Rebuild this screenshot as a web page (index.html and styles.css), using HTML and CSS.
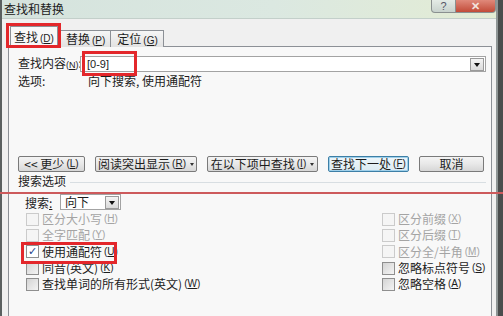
FILE: index.html
```html
<!DOCTYPE html>
<html lang="zh-CN">
<head>
    <meta charset="UTF-8">
    <meta name="viewport" content="width=device-width, initial-scale=1.0">
    <title>查找和替换</title>
    <link rel="stylesheet" href="styles.css">
</head>
<body>
    <div class="window">
        <div class="titlebar">
            <span class="title">查找和替换</span>
            <div class="caption-btns">
                <span class="cap-help">?</span>
                <span class="cap-close">✕</span>
            </div>
        </div>

        <div class="dialog">
            <div class="tabs">
                <span class="tab current">查找<span class="key">(<u>D</u>)</span></span>
                <span class="tab">替换<span class="key">(<u>P</u>)</span></span>
                <span class="tab">定位<span class="key">(<u>G</u>)</span></span>
            </div>

            <div class="panel">
                <div class="find-row">
                    <span class="find-label">查找内容<span class="key">(<u>N</u>)</span>:</span>
                    <div class="combo find-combo">
                        <span class="value marked">[0-9]</span>
                        <span class="drop"></span>
                    </div>
                </div>
                <div class="opts-row">
                    <span class="opts-label">选项:</span>
                    <span>向下搜索, 使用通配符</span>
                </div>

                <div class="btn-row">
                    <span class="btn b-less">&lt;&lt; 更少<span class="key">(<u>L</u>)</span></span>
                    <span class="btn b-read">阅读突出显示<span class="key">(<u>R</u>)</span><i class="arrow"></i></span>
                    <span class="btn b-in">在以下项中查找<span class="key">(<u>I</u>)</span><i class="arrow"></i></span>
                    <span class="btn b-next focus">查找下一处<span class="key">(<u>F</u>)</span></span>
                    <span class="btn b-cancel">取消</span>
                </div>

                <div class="section-title">搜索选项</div>

                <div class="search-row">
                    <span class="search-label">搜索<u>:</u></span>
                    <div class="combo dir-combo">
                        <span class="value">向下</span>
                        <span class="drop"></span>
                    </div>
                </div>

                <div class="checks">
                    <div class="chk off"><span class="box"></span>区分大小写<span class="key">(<u>H</u>)</span></div>
                    <div class="chk off"><span class="box"></span>区分前缀<span class="key">(<u>X</u>)</span></div>
                    <div class="chk off"><span class="box"></span>全字匹配<span class="key">(<u>Y</u>)</span></div>
                    <div class="chk off"><span class="box"></span>区分后缀<span class="key">(<u>T</u>)</span></div>
                    <div class="chk marked-row"><span class="box checked">✓</span>使用通配符<span class="key">(<u>U</u>)</span></div>
                    <div class="chk off"><span class="box"></span>区分全/半角<span class="key">(<u>M</u>)</span></div>
                    <div class="chk"><span class="box"></span>同音(英文)<span class="key">(<u>K</u>)</span></div>
                    <div class="chk"><span class="box"></span>忽略标点符号<span class="key">(<u>S</u>)</span></div>
                    <div class="chk"><span class="box"></span>查找单词的所有形式(英文)<span class="key">(<u>W</u>)</span></div>
                    <div class="chk"><span class="box"></span>忽略空格<span class="key">(<u>A</u>)</span></div>
                </div>
            </div>
        </div>
    </div>

    <div class="red-line"></div>
</body>
</html>
```

FILE: styles.css
```css
body {
    margin: 0;
    height: 316px;
    overflow: hidden;
    position: relative;
    background: #4a4d4d;
    font-family: "Noto Sans CJK SC", "Liberation Sans", sans-serif;
    font-size: 12px;
    color: #1c1c1c;
    white-space: nowrap;
}
.window {
    width: 494px;
    height: 316px;
    border-left: 2px solid #5b6060;
    border-right: 2px solid #8e9595;
    background: #f0f0f0;
    display: flex;
    flex-direction: column;
}
.titlebar {
    height: 18px;
    display: flex;
    align-items: flex-start;
    background: linear-gradient(90deg, #d5e3dd, #dbe8e1 55%, #e3ecd4);
    border-bottom: 1px solid #c3cfca;
}
.title {
    padding: 2px 0 0 2px;
    line-height: 14px;
    color: #202020;
}
.caption-btns {
    margin-left: auto;
    display: flex;
}
.cap-help, .cap-close {
    height: 12px;
    line-height: 12px;
    text-align: center;
    font-family: "Liberation Sans", sans-serif;
    font-size: 11px;
    border: 1px solid #8a9090;
    border-top: none;
}
.cap-help {
    width: 23px;
    background: linear-gradient(#e4ebe6, #c8d2cd);
    color: #556;
    border-radius: 0 0 0 4px;
}
.cap-close {
    width: 39px;
    background: linear-gradient(#e0897a, #c24b38);
    color: #f3e2dc;
    font-weight: bold;
    border-left: none;
    border-radius: 0 0 4px 0;
}

.dialog {
    flex: 1;
    display: flex;
    flex-direction: column;
}
.tabs {
    height: 21px;
    padding: 7px 0 0 8px;
    display: flex;
    align-items: flex-end;
    margin-bottom: -1px;
    position: relative;
    z-index: 1;
}
.tab {
    height: 16px;
    line-height: 16px;
    padding: 0 5px 0 6px;
    border: 1px solid #8c9096;
    border-bottom: none;
    background: linear-gradient(#f6f6f6, #e2e2e2);
    margin-left: -1px;
}
.tab.current {
    height: 20px;
    line-height: 20px;
    padding: 0 3px;
    background: #f8f8f8;
    margin-left: 0;
    margin-right: 2px;
    position: relative;
}
.tab.current::after {
    content: "";
    position: absolute;
    left: -5px;
    right: -4px;
    top: -4px;
    bottom: -1px;
    border: 3px solid #e3272b;
}
.key {
    font-size: 10px;
    font-family: "Liberation Sans", sans-serif;
    padding-left: 2px;
}

.panel {
    flex: 1;
    margin: 0 4px 0 6px;
    padding: 8px 5px 0 9px;
    border: 1px solid #8c9096;
    border-bottom: none;
    background: #f8f8f8;
}
.find-row, .search-row {
    display: flex;
    align-items: center;
}
.find-label {
    width: 62px;
    flex-shrink: 0;
    line-height: 16px;
}
.find-label .key {
    font-size: 9px;
    padding-left: 0;
}
.combo {
    height: 14px;
    border: 1px solid #a3a3a3;
    background: #fff;
    display: flex;
    align-items: center;
    padding-left: 4px;
}
.find-combo {
    flex: 1;
    padding-left: 6px;
}
.value {
    line-height: 14px;
    font-size: 11px;
}
.value.marked {
    font-family: "Liberation Sans", sans-serif;
    position: relative;
}
.value.marked::after {
    content: "";
    position: absolute;
    left: -5px;
    right: -28px;
    top: -6px;
    bottom: -5px;
    border: 3px solid #e3272b;
}
.drop {
    margin-left: auto;
    width: 12px;
    height: 11px;
    margin-right: 1px;
    border: 1px solid #9a9a9a;
    background: linear-gradient(#f4f4f4, #dadada);
    position: relative;
}
.drop::after {
    content: "";
    position: absolute;
    left: 3px;
    top: 4px;
    border: 3px solid transparent;
    border-top: 4px solid #111;
    border-bottom: none;
}
.opts-row {
    margin-top: 2px;
    line-height: 12px;
    display: flex;
}
.opts-label {
    width: 70px;
}

.btn-row {
    margin-top: 69px;
    display: flex;
    gap: 10px;
}
.btn {
    height: 14px;
    line-height: 14px;
    border: 1px solid #7a7a7a;
    border-radius: 2px;
    background: linear-gradient(#f4f4f4, #e8e8e8 50%, #d6d6d6);
    display: flex;
    justify-content: center;
    align-items: center;
}
.btn.focus {
    border-color: #3d7fa6;
    background: linear-gradient(#eef6fa, #dcebf2);
    box-shadow: inset 0 0 0 1px #9fd0ea;
}
.b-less { width: 65px; }
.b-read { width: 100px; }
.b-in { width: 109px; }
.b-next { width: 79px; }
.b-cancel { width: 63px; }
.arrow {
    margin-left: 4px;
    border: 2.5px solid transparent;
    border-top: 3px solid #333;
    border-bottom: none;
}

.section-title {
    margin-top: 3px;
    line-height: 12px;
    display: flex;
    align-items: center;
}
.section-title::after {
    content: "";
    flex: 1;
    margin: 2px 0 0 4px;
    border-top: 1px solid #d8dee2;
}

.search-row {
    margin-top: 7px;
    padding-left: 7px;
}
.search-label {
    width: 35px;
    line-height: 15px;
}
.dir-combo {
    width: 55px;
}
.dir-combo .value {
    font-size: 12px;
}

.checks {
    padding-left: 8px;
    display: grid;
    grid-template-columns: 356px 1fr;
    grid-auto-rows: 16.3px;
    margin-top: 1px;
}
.chk {
    display: flex;
    align-items: center;
    line-height: 14px;
}
.chk.off {
    color: #a4a4a4;
}
.box {
    width: 11px;
    height: 11px;
    margin-right: 3px;
    border: 1px solid #8f8f8f;
    background: linear-gradient(135deg, #d4d4d4, #f4f4f4);
    font-size: 11px;
    line-height: 11px;
    text-align: center;
    color: #24428a;
    font-family: "DejaVu Sans", sans-serif;
}
.chk.off .box {
    border-color: #cbcbcb;
    background: #f5f5f5;
}
.box.checked {
    background: #fff;
}
.marked-row {
    position: relative;
}
.marked-row::after {
    content: "";
    position: absolute;
    left: -5px;
    width: 90px;
    top: -2px;
    bottom: -4px;
    border: 3px solid #e3272b;
}

.red-line {
    position: absolute;
    left: 0;
    right: 0;
    top: 192px;
    height: 2px;
    background: #cd5a5c;
}
```
